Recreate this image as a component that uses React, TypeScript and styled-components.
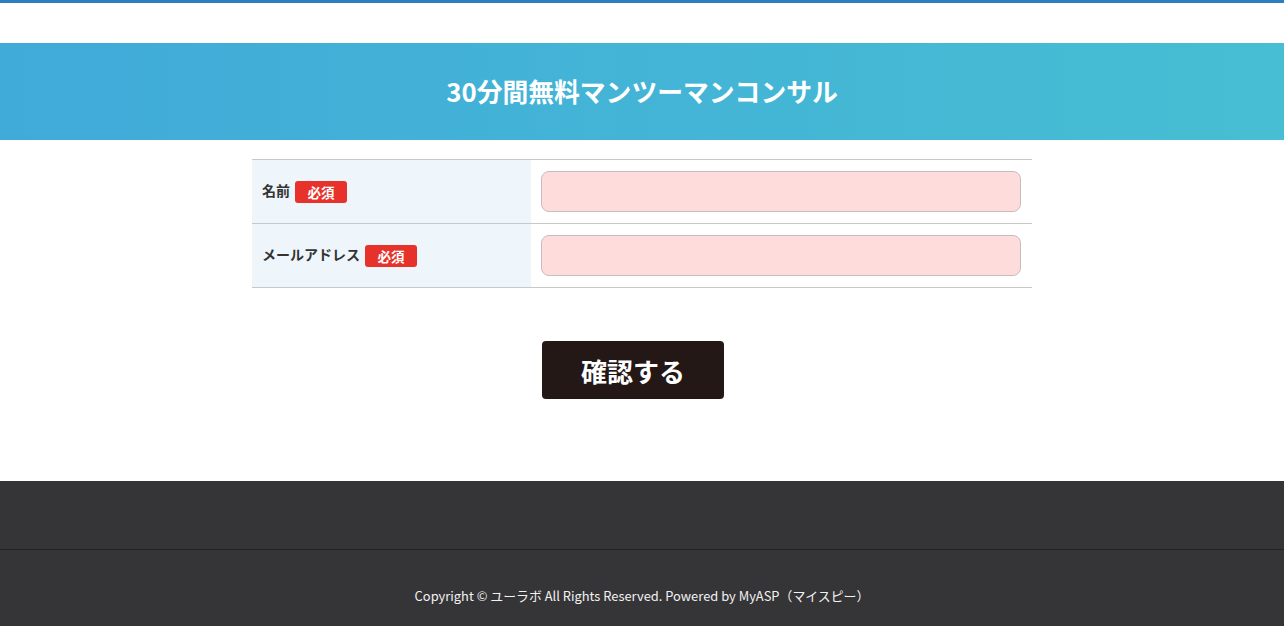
import React from "react";
import styled, { createGlobalStyle } from "styled-components";

const GlobalStyle = createGlobalStyle`
  html, body {
    margin: 0;
    padding: 0;
    background: #ffffff;
    font-family: "Noto Sans CJK JP", "Noto Sans", sans-serif;
    color: #333333;
  }
  * {
    box-sizing: border-box;
  }
`;

const TopBar = styled.div`
  height: 43px;
  border-top: 3px solid #2b7fc1;
  background: #ffffff;
`;

const TitleBand = styled.header`
  height: 97px;
  background: linear-gradient(90deg, #40aad9 0%, #47bed3 100%);
  display: flex;
  align-items: center;
  justify-content: center;
`;

const Title = styled.h1`
  margin: 0;
  font-size: 25.8px;
  font-weight: 700;
  color: #ffffff;
  margin-top: -2px;
`;

const Main = styled.main`
  padding: 19px 0 82px;
  display: flex;
  flex-direction: column;
  align-items: center;
`;

const FormTable = styled.div`
  width: 780px;
  border-top: 1px solid #c8c8c8;
`;

const Row = styled.div`
  display: grid;
  grid-template-columns: 279px 1fr;
  height: 64px;
  border-bottom: 1px solid #c8c8c8;
`;

const LabelCell = styled.div`
  background: #eef5fb;
  display: flex;
  align-items: center;
  padding-left: 10px;
  gap: 5px;
  font-size: 14px;
  font-weight: 700;
  color: #333333;
`;

const LabelText = styled.span`
  margin-top: -4px;
`;

const Required = styled.span`
  display: inline-flex;
  align-items: center;
  justify-content: center;
  width: 52px;
  height: 22px;
  border-radius: 3px;
  background: #e6322a;
  color: #ffffff;
  font-size: 13.5px;
  font-weight: 700;
  margin-top: 1px;
`;

const InputCell = styled.div`
  display: flex;
  align-items: center;
  padding: 0 11px 0 10px;
`;

const TextInput = styled.input`
  width: 100%;
  height: 41px;
  border: 1px solid #c9bcbc;
  border-radius: 8px;
  background: #ffdcdc;
  outline: none;
  font-size: 14px;
  padding: 0 10px;
`;

const SubmitButton = styled.button`
  margin: 53px 18px 0 0;
  width: 182px;
  height: 58px;
  border: none;
  border-radius: 4px;
  background: #231816;
  color: #ffffff;
  font-family: "Noto Sans CJK JP", sans-serif;
  font-size: 26px;
  font-weight: 700;
  cursor: pointer;
`;

const Footer = styled.footer`
  background: #353437;
`;

const FooterTop = styled.div`
  height: 69px;
  border-bottom: 1px solid #232224;
`;

const FooterBottom = styled.div`
  height: 76px;
  display: flex;
  justify-content: center;
  padding-top: 36px;
  font-size: 12.9px;
  color: #f2f2f2;
`;

const fields = [
  { label: "名前", type: "text" },
  { label: "メールアドレス", type: "email" },
];

const App = (): JSX.Element => {
  return (
    <>
      <GlobalStyle />
      <TopBar />
      <TitleBand>
        <Title>30分間無料マンツーマンコンサル</Title>
      </TitleBand>
      <Main>
        <FormTable>
          {fields.map((field) => (
            <Row key={field.label}>
              <LabelCell>
                <LabelText>{field.label}</LabelText>
                <Required>必須</Required>
              </LabelCell>
              <InputCell>
                <TextInput type={field.type} />
              </InputCell>
            </Row>
          ))}
        </FormTable>
        <SubmitButton>確認する</SubmitButton>
      </Main>
      <Footer>
        <FooterTop />
        <FooterBottom>
          Copyright © ユーラボ All Rights Reserved. Powered by MyASP（マイスピー）
        </FooterBottom>
      </Footer>
    </>
  );
};

export default App;
